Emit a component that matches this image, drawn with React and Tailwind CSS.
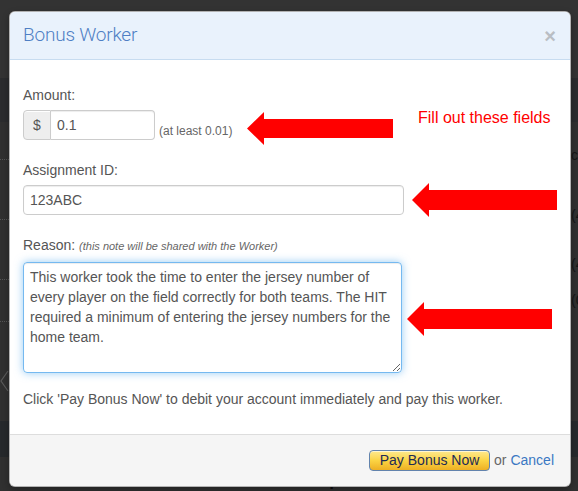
import React from "react";

function Arrow({ className, w, h }) {
  const hy = h / 2;
  const head = 17;
  const s1 = Math.round(h * 0.21);
  const s2 = h - s1;
  return (
    <svg className={className} width={w} height={h} viewBox={`0 0 ${w} ${h}`}>
      <polygon
        points={`0,${hy} ${head},0 ${head},${s1} ${w},${s1} ${w},${s2} ${head},${s2} ${head},${h}`}
        fill="#ff0000"
      />
    </svg>
  );
}

export default function App() {
  const reason =
    "This worker took the time to enter the jersey number of\nevery player on the field correctly for both teams. The HIT\nrequired a minimum of entering the jersey numbers for the\nhome team.";
  return (
    <div className="relative w-[578px] h-[491px] overflow-hidden bg-[#333333] font-['Liberation_Sans',Arial,sans-serif]">
      {/* page behind overlay */}
      <div className="flex flex-col h-full">
        <div className="h-[80px] bg-[#333333]" />
        <div className="h-[45px] bg-[#2b2c2e]" />
        <div className="h-[305px] bg-[#303030] flex justify-between">
          <div className="w-[9px] flex flex-col">
            <div className="h-[38px] border-b border-dotted border-[#555]" />
            <div className="h-[60px] border-b border-dotted border-[#555]" />
            <div className="h-[60px] border-b border-dotted border-[#555]" />
            <div className="h-[42px] border-b border-dotted border-[#555]" />
            <div className="mt-[48px]">
              <svg width="9" height="22" viewBox="0 0 9 22">
                <path d="M8 1 L1 11 L8 21" stroke="#5a5a5a" strokeWidth="1.2" fill="none" />
              </svg>
            </div>
          </div>
          <div className="w-[7px] flex flex-col text-[14px] leading-[20px] text-[#161616] whitespace-nowrap">
            <div className="mt-[23px]">ch</div>
            <div className="mt-[40px]">(4</div>
            <div className="mt-[29px]">(4</div>
            <div className="mt-[16px]">(0</div>
          </div>
        </div>
        <div className="h-[37px] bg-[#26292c]" />
        <div className="flex-1 bg-[#303030] flex justify-center pt-[14px]">
          <div className="pl-[70px] text-[17px] font-bold leading-[20px] text-[#0c0c0c]">Description</div>
        </div>
      </div>

      {/* modal */}
      <div className="absolute left-[9px] top-[11px] w-[562px] h-[476px] rounded-[6px] bg-white border border-black/30 shadow-[0_3px_7px_rgba(0,0,0,0.3)] flex flex-col overflow-hidden">
        <div className="h-[48px] shrink-0 bg-[#e9f2fc] border-b border-[#c7dcf0] flex items-center justify-between pl-[13px] pr-[14px]">
          <div className="font-['Roboto',sans-serif] font-light text-[19px] text-[#4f7fc4] tracking-[-0.2px]">Bonus Worker</div>
          <div className="text-[20px] font-bold leading-[20px] text-[#b9bec4]">×</div>
        </div>

        <div className="flex-1 pl-[13px] pr-[14px] pt-[25px] text-[14px] leading-[20px] text-[#555]">
          <div className="mb-[5px]">Amount:</div>
          <div className="flex items-end mb-[20px]">
            <div className="flex h-[30px]">
              <div className="w-[28px] flex items-center justify-center bg-[#eeeeee] border border-[#cccccc] rounded-l-[4px] text-[#555] shadow-[inset_0_1px_0_#fff]">
                $
              </div>
              <div className="w-[104px] flex items-center pl-[6px] border border-l-0 border-[#cccccc] rounded-r-[4px] shadow-[inset_0_1px_1px_rgba(0,0,0,0.075)] text-[#555]">
                0.1
              </div>
            </div>
            <div className="ml-[4px] text-[12px] leading-[14px] pb-[2px] text-[#666]">(at least 0.01)</div>
          </div>

          <div className="mb-[5px]">Assignment ID:</div>
          <div className="mb-[20px] w-[381px] h-[30px] flex items-center pl-[6px] border border-[#cccccc] rounded-[4px] shadow-[inset_0_1px_1px_rgba(0,0,0,0.075)] text-[#555]">
            123ABC
          </div>

          <div className="mb-[6px]">
            Reason: <span className="italic text-[11px] text-[#666]">(this note will be shared with the Worker)</span>
          </div>
          <textarea
            readOnly
            value={reason}
            className="block w-[379px] h-[111px] mb-[16px] px-[6px] py-[4px] border border-[rgba(82,168,236,0.8)] rounded-[4px] shadow-[inset_0_1px_1px_rgba(0,0,0,0.075),0_0_8px_rgba(82,168,236,0.6)] outline-none text-[14px] leading-[20px] text-[#555] font-['Liberation_Sans',Arial,sans-serif] resize-y overflow-hidden"
          />
          <div>Click 'Pay Bonus Now' to debit your account immediately and pay this worker.</div>
        </div>

        <div className="h-[52px] shrink-0 bg-[#f5f5f5] border-t border-[#dddddd] flex items-center justify-end pr-[16px] pb-[1px]">
          <div className="w-[121px] h-[21px] rounded-[4px] border border-[#6283ad] bg-linear-to-b from-[#fee98c] via-[#fbd443] to-[#edb023] shadow-[inset_0_1px_0_rgba(255,255,255,0.6)] flex items-center justify-center font-['Liberation_Sans_Narrow','Liberation_Sans',Arial,sans-serif] text-[14px] leading-[16px] text-[#1d2b55]">
            Pay Bonus Now
          </div>
          <div className="ml-[4px] text-[14px] text-[#666]">
            or <span className="text-[#3a78c3]">Cancel</span>
          </div>
        </div>
      </div>

      {/* annotations */}
      <div className="absolute left-[418px] top-[108px] text-[16px] leading-[20px] text-[#ff0000] whitespace-nowrap">
        Fill out these fields
      </div>
      <Arrow className="absolute left-[247px] top-[112px]" w={146} h={33} />
      <Arrow className="absolute left-[412px] top-[183px]" w={145} h={34} />
      <Arrow className="absolute left-[407px] top-[302px]" w={145} h={34} />
    </div>
  );
}
